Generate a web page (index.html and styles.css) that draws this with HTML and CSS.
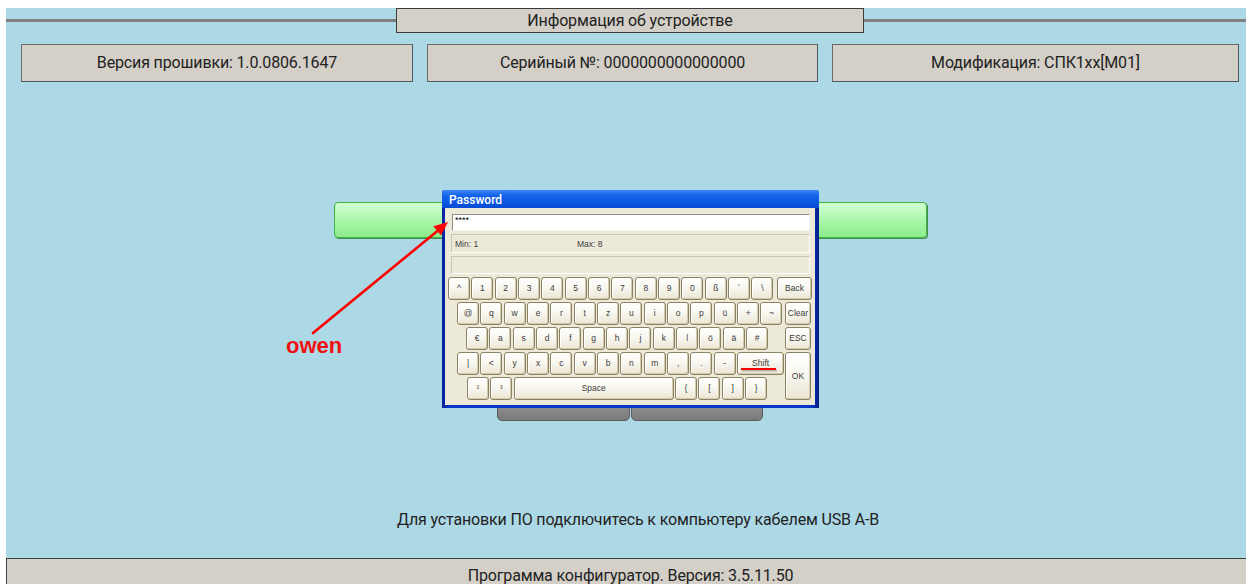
FILE: index.html
```html
<!DOCTYPE html>
<html lang="ru">
<head>
<meta charset="utf-8">
<title>Информация об устройстве</title>
<link rel="stylesheet" href="styles.css">
</head>
<body>
<div class="screen">
  <header class="title-row">
    <span class="rule"></span>
    <div class="title-box">Информация об устройстве</div>
    <span class="rule"></span>
  </header>

  <section class="info-row">
    <div class="info-box info-fw">Версия прошивки: 1.0.0806.1647</div>
    <div class="info-box info-sn">Серийный №: 0000000000000000</div>
    <div class="info-box info-mod">Модификация: СПК1xx[M01]</div>
  </section>

  <main class="stage">
    <div class="btn-green"></div>
    <div class="btn-pair">
      <div class="btn-grey"></div>
      <div class="btn-grey"></div>
    </div>
    <p class="hint">Для установки ПО подключитесь к компьютеру кабелем USB A-B</p>
  </main>

  <footer class="status">Программа конфигуратор. Версия: 3.5.11.50</footer>

  <!-- on-screen keyboard password prompt -->
  <div class="dialog">
    <div class="dlg-title">Password</div>
    <div class="dlg-body">
      <div class="dlg-input">****</div>
      <div class="dlg-limits"><span>Min: 1</span><span>Max: 8</span></div>
      <div class="dlg-msg"></div>
      <div class="kbd">
        <div class="krow r1">
          <button class="key">^</button><button class="key">1</button><button class="key">2</button><button class="key">3</button><button class="key">4</button><button class="key">5</button><button class="key">6</button><button class="key">7</button><button class="key">8</button><button class="key">9</button><button class="key">0</button><button class="key">ß</button><button class="key">´</button><button class="key">\</button>
          <button class="key key-back">Back</button>
        </div>
        <div class="krow r2">
          <button class="key">@</button><button class="key">q</button><button class="key">w</button><button class="key">e</button><button class="key">r</button><button class="key">t</button><button class="key">z</button><button class="key">u</button><button class="key">i</button><button class="key">o</button><button class="key">p</button><button class="key">ü</button><button class="key">+</button><button class="key">~</button>
          <button class="key key-side">Clear</button>
        </div>
        <div class="krow r3">
          <button class="key">€</button><button class="key">a</button><button class="key">s</button><button class="key">d</button><button class="key">f</button><button class="key">g</button><button class="key">h</button><button class="key">j</button><button class="key">k</button><button class="key">l</button><button class="key">ö</button><button class="key">ä</button><button class="key">#</button>
          <button class="key key-side">ESC</button>
        </div>
        <div class="krow r4">
          <button class="key">|</button><button class="key">&lt;</button><button class="key">y</button><button class="key">x</button><button class="key">c</button><button class="key">v</button><button class="key">b</button><button class="key">n</button><button class="key">m</button><button class="key">,</button><button class="key">.</button><button class="key">-</button>
          <button class="key key-shift">Shift</button>
        </div>
        <div class="krow r5">
          <button class="key key-sup">²</button><button class="key key-sup">³</button>
          <button class="key key-space">Space</button>
          <button class="key">{</button><button class="key">[</button><button class="key">]</button><button class="key">}</button>
        </div>
        <button class="key key-ok">OK</button>
      </div>
    </div>
  </div>

  <!-- red hand-drawn marks -->
  <svg class="marks" width="1248" height="584" viewBox="0 0 1248 584" aria-hidden="true">
    <line x1="307" y1="325" x2="432" y2="222.5" stroke="#ff0000" stroke-width="2.6" stroke-linecap="round"/>
    <polygon points="442,214 435,227.5 427.4,218.3" fill="#ff0000"/>
    <line x1="736" y1="362.6" x2="771" y2="362.6" stroke="#000" stroke-opacity="0.22" stroke-width="2"/>
    <line x1="735" y1="361" x2="770" y2="361" stroke="#ff0000" stroke-width="2"/>
  </svg>
  <span class="note-label">owen</span>
</div>
</body>
</html>
```

FILE: styles.css
```css
html, body {
  margin: 0;
  height: 100%;
}

body {
  background: #ffffff;
  overflow: hidden;
  font-family: Roboto, "Liberation Sans", sans-serif;
  color: #222222;
}

/* main device panel */
.screen {
  position: relative;
  margin: 8px 0 0 6px;
  width: 1248px;
  height: 584px;
  background: #add8e6;
  display: flex;
  flex-direction: column;
  letter-spacing: -0.15px;
}

/* heading with side rules */
.title-row {
  display: flex;
  align-items: center;
  height: 25px;
}

.rule {
  flex: 1;
  height: 3px;
  background: #808080;
}

.title-box {
  width: 466px;
  height: 23px;
  border: 1px solid #3c3c3c;
  background: #d4d0c8;
  font-size: 16px;
  line-height: 23px;
  text-align: center;
}

/* device info fields */
.info-row {
  display: flex;
  gap: 14px;
  margin-top: 11px;
  padding-left: 15px;
}

.info-box {
  box-sizing: border-box;
  height: 38px;
  border: 1px solid #6a6a6a;
  border-right-color: #4e5a60;
  border-bottom-color: #4e5a60;
  background: #d4d0c8;
  font-size: 16px;
  line-height: 36px;
  text-align: center;
}

.info-fw { width: 392px; }
.info-sn { width: 391px; }
.info-mod { width: 407px; }

/* central area */
.stage {
  flex: 1;
  display: flex;
  flex-direction: column;
  align-items: center;
}

.btn-green {
  box-sizing: border-box;
  width: 593px;
  height: 36px;
  margin-top: 120px;
  border: 1px solid #3cb83c;
  border-radius: 4px;
  background: linear-gradient(#d2ffd2, #a8f6a8 55%, #8cec8c);
  box-shadow: 1px 1px 0 #4a8a5a;
}

.btn-pair {
  display: flex;
  gap: 1px;
  margin-top: 153px;
}

.btn-grey {
  box-sizing: border-box;
  width: 133px;
  height: 30px;
  border: 1px solid #5c5c5c;
  border-radius: 5px;
  background: linear-gradient(#9c9c9c, #8a8a8a 60%, #7a7a7a);
}

.btn-grey + .btn-grey {
  width: 132px;
}

.hint {
  margin: 89px 0 0 16px;
  font-size: 16px;
  line-height: 19px;
}

/* status bar */
.status {
  box-sizing: border-box;
  height: 34px;
  padding-top: 7px;
  border-top: 1px solid #404040;
  border-left: 1px solid #404040;
  background: #d4d0c8;
  font-size: 16px;
  line-height: 19px;
  text-align: center;
}

/* password dialog */
.dialog {
  position: absolute;
  left: 436px;
  top: 182px;
  width: 377px;
  height: 218px;
  box-sizing: border-box;
  padding: 0 4px 3px 3px;
  background: linear-gradient(90deg, #08209a, #0535c4 2%, #0535c4 98%, #081c86);
  border-radius: 3px 3px 0 0;
  display: flex;
  flex-direction: column;
  font-family: "Liberation Sans", Arial, sans-serif;
  letter-spacing: 0;
}

.dlg-title {
  height: 18px;
  margin: 0 -4px 0 -3px;
  padding-left: 7px;
  border-radius: 3px 3px 0 0;
  background: linear-gradient(#3c86f6, #1664ec 30%, #0a56e2 70%, #0a4ad2);
  color: #ffffff;
  font-family: Roboto, "Liberation Sans", sans-serif;
  font-weight: 500;
  font-size: 12px;
  line-height: 21px;
}

.dlg-body {
  flex: 1;
  display: flex;
  flex-direction: column;
  background: #ece9d8;
}

.dlg-input {
  box-sizing: border-box;
  height: 17px;
  margin: 6px 5px 0 7px;
  padding-left: 2px;
  border: 1px solid #8e8e8e;
  border-right-color: #f4f4f4;
  border-bottom-color: #f4f4f4;
  background: #ffffff;
  color: #000000;
  font-size: 9px;
  line-height: 11px;
}

.dlg-limits,
.dlg-msg {
  box-sizing: border-box;
  margin: 3px 5px 0 6px;
  border: 1px solid #cac6b2;
  border-right-color: #ffffff;
  border-bottom-color: #ffffff;
  color: #3c3c3c;
  font-size: 8.5px;
}

.dlg-limits {
  height: 19px;
  display: grid;
  grid-template-columns: 122px auto;
  align-items: center;
  padding-left: 3px;
}

.dlg-msg {
  height: 18px;
}

/* on-screen keyboard */
.kbd {
  display: grid;
  grid-template-columns: 337px 27px;
  grid-template-rows: repeat(5, 23px);
  row-gap: 2px;
  width: 364px;
  margin: 3px 0 0 3px;
}

.krow {
  display: flex;
  gap: 1.35px;
  grid-column: 1 / -1;
}

.r1 { grid-row: 1; }
.r2 { grid-row: 2; padding-left: 9px; }
.r3 { grid-row: 3; padding-left: 18px; }
.r4 { grid-row: 4; grid-column: 1; padding-left: 9px; }
.r5 { grid-row: 5; grid-column: 1; padding-left: 19px; }

.key {
  box-sizing: border-box;
  flex: none;
  width: 22px;
  height: 23px;
  padding: 0;
  border: 1px solid #8a8262;
  border-radius: 3px;
  background: linear-gradient(#ffffff, #f8f7f0 45%, #ebe7d4);
  box-shadow: inset -1px -1px 0 #d2cbad, inset 1px 1px 0 #ffffff;
  color: #3c3c3c;
  font-family: "Liberation Sans", Arial, sans-serif;
  font-size: 8.5px;
  line-height: 1;
  display: flex;
  align-items: center;
  justify-content: center;
}

.key-back {
  width: 35px;
  margin-left: auto;
}

.key-side {
  width: 26px;
  margin-left: auto;
  margin-right: 1px;
}

.key-shift { width: 47px; }
.key-space { width: 160px; }
.key-sup { font-size: 7.5px; }

.key-ok {
  grid-column: 2;
  grid-row: 4 / 6;
  width: 26px;
  height: 48px;
}

/* annotation layer */
.marks {
  position: absolute;
  left: 0;
  top: 0;
  pointer-events: none;
}

.note-label {
  position: absolute;
  left: 280px;
  top: 327px;
  color: #f01010;
  font-family: "Liberation Sans", Arial, sans-serif;
  font-weight: bold;
  font-size: 22px;
  line-height: 22px;
  letter-spacing: 0;
}
```
